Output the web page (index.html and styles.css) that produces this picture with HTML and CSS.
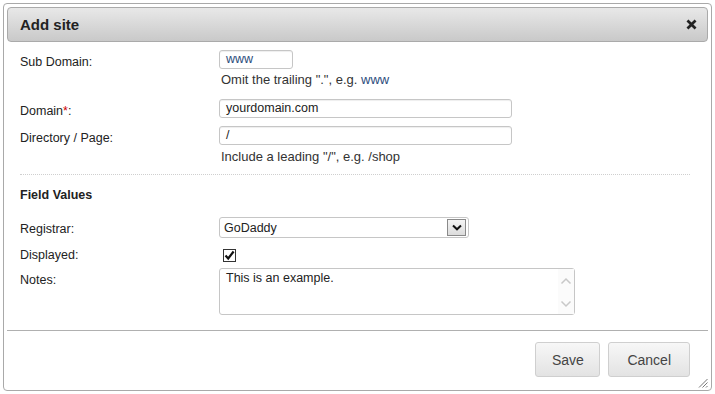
FILE: index.html
```html
<!DOCTYPE html>
<html lang="en">

<head>
  <meta charset="UTF-8">
  <meta name="viewport" content="width=device-width, initial-scale=1.0">
  <title>Add site</title>
  <link rel="stylesheet" href="styles.css">
</head>

<body>
  <div class="dialog">
    <header class="titlebar">
      <h1>Add site</h1>
      <button class="close" title="Close">
        <svg width="11" height="11" viewBox="0 0 11 11">
          <path d="M0.5 2.4 L2.4 0.5 L5.5 3.6 L8.6 0.5 L10.5 2.4 L7.4 5.5 L10.5 8.6 L8.6 10.5 L5.5 7.4 L2.4 10.5 L0.5 8.6 L3.6 5.5 Z" fill="#222" />
        </svg>
      </button>
    </header>
    <main class="content">
      <div class="row">
        <label class="label">Sub Domain:</label>
        <div class="field">
          <div class="input short sub">www</div>
          <div class="hint">Omit the trailing ".", e.g. <span class="eg">www</span></div>
        </div>
      </div>
      <div class="row domain">
        <label class="label">Domain<span class="req">*</span>:</label>
        <div class="field">
          <div class="input long">yourdomain.com</div>
        </div>
      </div>
      <div class="row directory">
        <label class="label">Directory / Page:</label>
        <div class="field">
          <div class="input long">/</div>
          <div class="hint dir-hint">Include a leading "/", e.g. /shop</div>
        </div>
      </div>
      <hr class="divider">
      <h2 class="section">Field Values</h2>
      <div class="row registrar">
        <label class="label">Registrar:</label>
        <div class="field">
          <div class="select">
            <span>GoDaddy</span>
            <span class="arrow">
              <svg width="10" height="7" viewBox="0 0 10 7">
                <path d="M1 1.5 L5 5.3 L9 1.5" fill="none" stroke="#111" stroke-width="2" />
              </svg>
            </span>
          </div>
        </div>
      </div>
      <div class="row displayed">
        <label class="label">Displayed:</label>
        <div class="field">
          <span class="checkbox">
            <svg width="11" height="11" viewBox="0 0 11 11">
              <path d="M1.5 5.5 L4.2 8.5 L9.6 1.5" fill="none" stroke="#111" stroke-width="2.2" />
            </svg>
          </span>
        </div>
      </div>
      <div class="row notes">
        <label class="label">Notes:</label>
        <div class="field">
          <div class="textarea">
            <div class="text">This is an example.</div>
            <div class="scroll">
              <svg width="12" height="8" viewBox="0 0 12 8">
                <path d="M1.5 6.5 L6 2 L10.5 6.5" fill="none" stroke="#c8c8c8" stroke-width="1.5" />
              </svg>
              <svg width="12" height="8" viewBox="0 0 12 8">
                <path d="M1.5 1.5 L6 6 L10.5 1.5" fill="none" stroke="#c8c8c8" stroke-width="1.5" />
              </svg>
            </div>
          </div>
        </div>
      </div>
    </main>
    <footer class="buttons">
      <button class="btn save">Save</button>
      <button class="btn">Cancel</button>
    </footer>
    <span class="resize">
      <svg width="10" height="10" viewBox="0 0 10 10">
        <path d="M9.5 1 L1 9.5 M9.5 4.5 L4.5 9.5 M9.5 8 L8 9.5" stroke="#777" stroke-width="1" />
      </svg>
    </span>
  </div>
</body>

</html>
```

FILE: styles.css
```css
body {
  margin: 0;
  background: #fff;
  font-family: "Liberation Sans", Arial, sans-serif;
  font-size: 12px;
  color: #222;
}

.dialog {
  position: relative;
  box-sizing: border-box;
  width: 709px;
  margin: 3px;
  padding: 3px;
  border: 1px solid #a9a9a9;
  border-radius: 4px;
  background: #fff;
}

.titlebar {
  display: flex;
  align-items: center;
  justify-content: space-between;
  box-sizing: border-box;
  height: 35px;
  padding: 0 12px;
  border: 1px solid #aaa;
  border-radius: 4px;
  background: linear-gradient(#e8e8e8, #c9c9c9);
}

.titlebar h1 {
  margin: 0;
  font-size: 15px;
  font-weight: bold;
  color: #222;
}

.close {
  display: flex;
  padding: 0;
  margin-right: -2px;
  border: none;
  background: none;
}

.content {
  padding: 8px 18px 15px 13px;
}

.row {
  display: flex;
}

.label {
  width: 199px;
  flex: none;
  padding-top: 5px;
  line-height: 15px;
  font-size: 12.5px;
  color: #222;
}

.req {
  color: #c00;
}

.field {
  display: flex;
  flex-direction: column;
  align-items: flex-start;
}

.input {
  box-sizing: border-box;
  height: 19px;
  padding: 0 6px;
  border: 1px solid #c6c6c6;
  border-radius: 3px;
  line-height: 17px;
  font-size: 12.5px;
  color: #222;
  box-shadow: inset 0 1px 1px #eee;
}

.input.short {
  width: 74px;
}

.input.long {
  width: 293px;
}

.input.sub {
  color: #2c4c7c;
}

.hint {
  margin-top: 3px;
  margin-left: 2px;
  line-height: 15px;
  font-size: 13px;
  color: #333;
}

.hint .eg {
  color: #2c4c7c;
}

.dir-hint {
  margin-top: 4px;
}

.domain {
  margin-top: 12px;
}

.directory {
  margin-top: 7px;
}

.divider {
  margin: 10px 0 0;
  border: none;
  border-top: 1px dotted #cfcfcf;
}

.section {
  margin: 13px 0 0;
  font-size: 12.5px;
  line-height: 15px;
  font-weight: bold;
  color: #222;
}

.registrar {
  margin-top: 14px;
}

.select {
  display: flex;
  align-items: center;
  justify-content: space-between;
  box-sizing: border-box;
  width: 250px;
  height: 21px;
  padding: 0 2px 0 4px;
  border: 1px solid #c6c6c6;
  border-radius: 3px;
  font-size: 12.5px;
  color: #222;
}

.select .arrow {
  display: flex;
  align-items: center;
  justify-content: center;
  box-sizing: border-box;
  width: 19px;
  height: 17px;
  border: 1px solid #8a8a8a;
  background: linear-gradient(#f4f4f4, #dcdcdc);
}

.displayed {
  margin-top: 10px;
}

.displayed .label {
  padding-top: 0;
}

.displayed .field {
  height: 15px;
  justify-content: center;
}

.checkbox {
  display: flex;
  align-items: center;
  justify-content: center;
  box-sizing: border-box;
  width: 13px;
  height: 13px;
  margin-left: 4px;
  border: 1px solid #333;
  background: #fff;
}

.notes {
  margin-top: 5px;
}

.textarea {
  display: flex;
  box-sizing: border-box;
  width: 356px;
  height: 47px;
  border: 1px solid #c6c6c6;
  border-radius: 3px;
}

.textarea .text {
  flex: 1;
  padding: 2px 6px;
  line-height: 15px;
  font-size: 12.5px;
  color: #222;
}

.textarea .scroll {
  display: flex;
  flex-direction: column;
  justify-content: space-between;
  align-items: center;
  width: 14px;
  padding: 8px 1px 6px;
  background: #fbfbfb;
}

.buttons {
  display: flex;
  justify-content: flex-end;
  gap: 8px;
  padding: 11px 18px 10px 0;
  border-top: 1px solid #b0b0b0;
}

.btn {
  box-sizing: border-box;
  height: 35px;
  padding: 0 18px;
  border: 1px solid #cfcfcf;
  border-radius: 3px;
  background: linear-gradient(#f7f7f7, #e3e3e3);
  font-family: "Liberation Sans", Arial, sans-serif;
  font-size: 14px;
  color: #444;
}

.btn.save {
  width: 65px;
  padding: 0;
}

.resize {
  position: absolute;
  right: 3px;
  bottom: 2px;
  display: flex;
}
```
